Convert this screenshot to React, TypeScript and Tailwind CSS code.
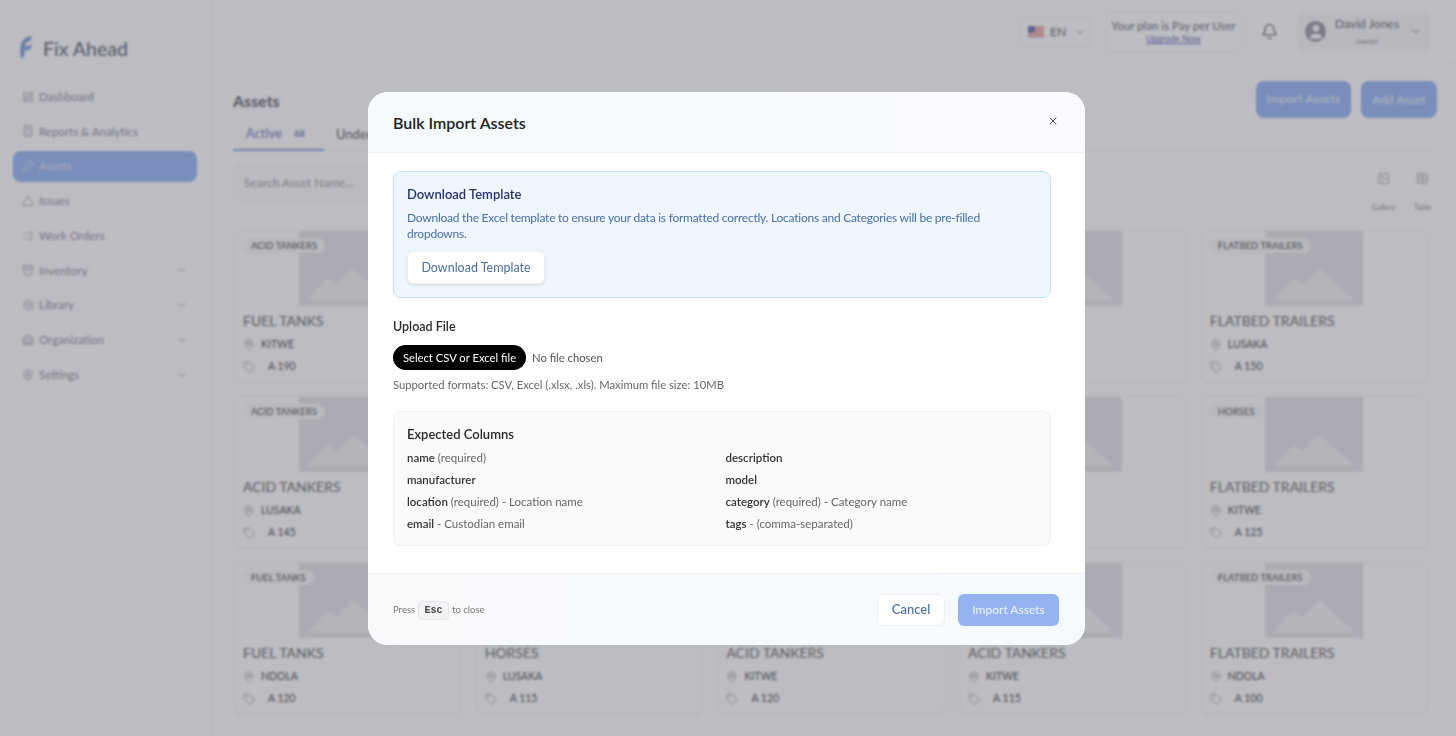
import React from "react";
import {
  Archive,
  Bell,
  Bolt,
  Building2,
  Calculator,
  ChevronDown,
  Image as ImageIcon,
  KeyRound,
  LayoutDashboard,
  ListChecks,
  MapPin,
  Settings,
  Table,
  Tag,
  Triangle,
  User,
  X,
} from "lucide-react";

const navItems = [
  { name: "Dashboard", icon: LayoutDashboard },
  { name: "Reports & Analytics", icon: Calculator },
  { name: "Assets", icon: KeyRound, active: true },
  { name: "Issues", icon: Triangle },
  { name: "Work Orders", icon: ListChecks },
  { name: "Inventory", icon: Archive, more: true },
  { name: "Library", icon: Bolt, more: true },
  { name: "Organization", icon: Building2, more: true },
  { name: "Settings", icon: Settings, more: true },
];

const assets = [
  { badge: "ACID TANKERS", title: "FUEL TANKS", place: "KITWE", code: "A 190" },
  { badge: "HORSES", title: "HORSES", place: "NDOLA", code: "A 185" },
  { badge: "FUEL TANKS", title: "FUEL TANKS", place: "KITWE", code: "A 180" },
  { badge: "ACID TANKERS", title: "ACID TANKERS", place: "LUSAKA", code: "A 170" },
  { badge: "FLATBED TRAILERS", title: "FLATBED TRAILERS", place: "LUSAKA", code: "A 150" },
  { badge: "ACID TANKERS", title: "ACID TANKERS", place: "LUSAKA", code: "A 145" },
  { badge: "HORSES", title: "HORSES", place: "KITWE", code: "A 140" },
  { badge: "FUEL TANKS", title: "FUEL TANKS", place: "NDOLA", code: "A 135" },
  { badge: "ACID TANKERS", title: "ACID TANKERS", place: "NDOLA", code: "A 130" },
  { badge: "HORSES", title: "FLATBED TRAILERS", place: "KITWE", code: "A 125" },
  { badge: "FUEL TANKS", title: "FUEL TANKS", place: "NDOLA", code: "A 120" },
  { badge: "HORSES", title: "HORSES", place: "LUSAKA", code: "A 115" },
  { badge: "ACID TANKERS", title: "ACID TANKERS", place: "KITWE", code: "A 120" },
  { badge: "ACID TANKERS", title: "ACID TANKERS", place: "KITWE", code: "A 115" },
  { badge: "FLATBED TRAILERS", title: "FLATBED TRAILERS", place: "NDOLA", code: "A 100" },
];

const columns = [
  { key: "name", note: " (required)" },
  { key: "description", note: "" },
  { key: "manufacturer", note: "" },
  { key: "model", note: "" },
  { key: "location", note: " (required) - Location name" },
  { key: "category", note: " (required) - Category name" },
  { key: "email", note: " - Custodian email" },
  { key: "tags", note: " - (comma-separated)" },
];

const Placeholder = () => (
  <svg viewBox="0 0 98 75" className="w-[98px] h-[75px] block">
    <rect width="98" height="75" fill="#e8e8ea" />
    <path d="M8 69 L29 47 L37 54 L54 37 L90 69 Z" fill="#f4f4f6" />
  </svg>
);

const AssetCard = ({ item }: { item: (typeof assets)[number] }) => (
  <div className="relative h-[152px] rounded-lg border border-[#f7f7f8] bg-white px-[8px] shadow-[0_1px_2px_rgba(0,0,0,0.04)]">
    <div className="flex justify-center">
      <Placeholder />
    </div>
    <span className="absolute left-[8px] top-[7px] rounded-full bg-[#fafafa] px-2 py-px text-[9.5px] leading-[13px] text-[#666]">
      {item.badge}
    </span>
    <div className="mt-[5px] text-[14px] leading-[20px] text-[#7c7c7c]">{item.title}</div>
    <div className="mt-[3px] flex h-[22px] items-center gap-[6px] text-[10.5px] text-[#666]">
      <MapPin className="h-3 w-3 text-[#a0a0a0] shrink-0" strokeWidth={1.5} />
      {item.place}
    </div>
    <div className="flex h-[22px] items-center gap-[13px] text-[10.5px] text-[#666]">
      <Tag className="h-3 w-3 text-[#a0a0a0] shrink-0" strokeWidth={1.5} />
      {item.code}
    </div>
  </div>
);

const App: React.FC = () => {
  return (
    <div className="relative flex h-[736px] w-[1456px] overflow-hidden bg-white font-['Lato',sans-serif]">
      {/* Sidebar */}
      <aside className="flex w-[213px] shrink-0 flex-col border-r border-[#f6f6f8] pl-[13px] pr-[15px]">
        <div className="flex h-[96px] items-start pl-[6px] pt-[35px]">
          <svg viewBox="0 0 16 26" className="h-[25px] w-[15px]">
            <path d="M3 25 C1 20 1 15 2 11 C3 5 7 1 14 1 L12 6 C8 6 7 9 6.5 12 L14 10 L12 15 L6 16 C6 20 6 23 3 25 Z" fill="#8fa9e0" />
          </svg>
          <span className="ml-[9px] text-[19.5px] font-medium leading-[27px] text-[#7d7f88]">Fix Ahead</span>
        </div>
        <nav className="flex flex-col gap-[3.75px] -mt-[15px]">
          {navItems.map((item) => {
            const Icon = item.icon;
            return (
              <div
                key={item.name}
                className={
                  item.active
                    ? "flex h-[31px] items-center rounded-lg bg-[#a3c0f4] pl-[9px] pr-[9px] text-white/70"
                    : "flex h-[31px] items-center rounded-lg pl-[9px] pr-[9px] text-[#a0a0a8]"
                }
              >
                <Icon className="h-[12px] w-[12px] shrink-0" strokeWidth={1.5} />
                <span className="ml-[5px] flex-1 text-[11.5px]">{item.name}</span>
                {item.more && <ChevronDown className="h-[12px] w-[12px]" strokeWidth={1.5} />}
              </div>
            );
          })}
        </nav>
      </aside>

      <div className="flex min-w-0 flex-1 flex-col">
        {/* Top bar */}
        <header className="flex h-[64px] shrink-0 items-center justify-end gap-[15px] border-b border-[#f6f6f8] pr-[26px]">
          <div className="flex h-[30px] w-[72px] items-center gap-[6px] rounded-md border border-[#f7f7f8] pl-[8px] text-[#777]">
            <svg viewBox="0 0 16 12" className="h-[12px] w-[16px]">
              <rect width="16" height="12" fill="#f0d5d5" />
              <path d="M0 1.5h16M0 4.2h16M0 6.9h16M0 9.6h16" stroke="#e08d8d" strokeWidth="1" />
              <rect width="7" height="6.5" fill="#7d88b8" />
            </svg>
            <span className="text-[12px]">EN</span>
            <ChevronDown className="ml-[2px] h-3 w-3" strokeWidth={1.5} />
          </div>
          <div className="flex h-[42px] w-[135px] flex-col items-center justify-center rounded-md border border-[#f7f7f8] leading-none">
            <span className="whitespace-nowrap text-[11.5px] text-[#83838a]">Your plan is Pay per User</span>
            <span className="mt-[3px] text-[9px] text-[#8080c0] underline">Upgrade Now</span>
          </div>
          <Bell className="mx-[5px] h-[17px] w-[17px] text-[#666]" strokeWidth={1.5} />
          <div className="flex h-[41px] w-[132px] items-center rounded-md bg-[#fafafb] pl-[7px]">
            <span className="flex h-[21px] w-[21px] items-center justify-center overflow-hidden rounded-full bg-[#a8a8ae]">
              <User className="h-[18px] w-[18px] text-white" fill="white" strokeWidth={1} />
            </span>
            <div className="ml-[8px] flex w-[66px] flex-col items-center leading-none">
              <span className="whitespace-nowrap text-[12.25px] text-[#7a7a80]">David Jones</span>
              <span className="mt-[6px] text-[8px] text-[#9a9aa0]">owner</span>
            </div>
            <ChevronDown className="ml-[9px] h-[13px] w-[13px] text-[#777]" strokeWidth={1.5} />
          </div>
        </header>

        {/* Page */}
        <main className="flex min-h-0 flex-1 flex-col pl-[20px] pr-[19px]">
          <div className="flex h-[54px] items-start justify-between">
            <h1 className="pt-[26px] text-[16px] font-bold leading-[22px] text-[#77777d]">Assets</h1>
            <div className="flex gap-[10px] pt-[17px]">
              <button className="h-[37px] w-[95px] rounded-lg bg-[#a3c0f4] text-[12.25px] text-white/80">Import Assets</button>
              <button className="h-[37px] w-[76px] rounded-lg bg-[#a3c0f4] text-[12px] text-white/80">Add Asset</button>
            </div>
          </div>
          <div className="flex h-[33px] items-start border-b border-[#f3f3f5]">
            <div className="flex h-[33px] w-[91px] items-center gap-[12px] border-b-2 border-[#a2aee0] pl-[13px] text-[13px] text-[#8d8dc0]">
              Active
              <span className="text-[9px] font-bold">68</span>
            </div>
            <span className="ml-[12px] text-[13px] leading-[33px] text-[#777]">Under Maintenance</span>
          </div>
          <div className="flex h-[79px] items-start justify-between pt-[14px]">
            <div className="flex h-[36px] w-[300px] items-center rounded-lg border border-[#f3f3f5] bg-[#fdfdfd] pl-[10px] text-[12px] text-[#aaaab0]">
              Search Asset Name...
            </div>
            <div className="mt-[7px] flex gap-[16px] pr-[3px] text-[#a0a0a0]">
              <div className="flex w-[23px] flex-col items-center">
                <ImageIcon className="h-[13px] w-[13px]" strokeWidth={1.25} />
                <span className="mt-[18px] text-[7.5px] leading-[10px]">Gallery</span>
              </div>
              <div className="flex w-[23px] flex-col items-center">
                <Table className="h-[13px] w-[13px]" strokeWidth={1.25} />
                <span className="mt-[18px] text-[7.5px] leading-[10px]">Table</span>
              </div>
            </div>
          </div>
          <div className="mr-[9px] ml-px grid grid-cols-5 gap-x-[14.5px] gap-y-[14px]">
            {assets.map((item, index) => (
              <AssetCard key={index} item={item} />
            ))}
          </div>
        </main>
      </div>

      {/* Modal overlay */}
      <div className="absolute inset-0 flex items-center justify-center bg-[#101024]/[0.28] pr-[3px] backdrop-blur-[1px]">
        <div className="flex h-[553px] w-[717px] flex-col overflow-hidden rounded-[20px] bg-white">
          <div className="flex h-[61px] shrink-0 items-center justify-between border-b border-[#eef0f3] bg-gradient-to-r from-[#f6fafe] to-[#f9fbfe] pl-[25px] pr-[26px] pt-[2px]">
            <h2 className="text-[16px] font-semibold text-[#222]">Bulk Import Assets</h2>
            <X className="mb-[3px] h-[12px] w-[12px] text-[#333]" strokeWidth={1.75} />
          </div>

          <div className="flex flex-1 flex-col px-[25px] pr-[34px] pt-[18px]">
            <div className="h-[127px] rounded-lg border border-[#c9dcf3] bg-[#eef6fe] px-[13px] pt-[12px]">
              <h3 className="text-[13px] font-semibold leading-[20px] text-[#27336b]">Download Template</h3>
              <p className="mt-[6px] text-[12px] leading-[16px] tracking-[-0.24px] text-[#4b6fa5]">
                Download the Excel template to ensure your data is formatted correctly. Locations and Categories will be pre-filled dropdowns.
              </p>
              <button className="mt-[9px] h-[33px] w-[138px] rounded-md border border-[#eef2f7] bg-white pt-[2px] text-[12.5px] text-[#4d6f9c] shadow-sm">
                Download Template
              </button>
            </div>

            <h3 className="mt-[20px] text-[12.5px] font-semibold leading-[18px] text-[#2a2a2a]">Upload File</h3>
            <div className="mt-[9px] flex items-center gap-[6px]">
              <button className="h-[25px] w-[133px] rounded-full bg-black pt-[2px] text-[11.25px] text-white">Select CSV or Excel file</button>
              <span className="pt-[2px] text-[11.25px] text-[#555]">No file chosen</span>
            </div>
            <p className="mt-[7px] text-[11.25px] leading-[16px] text-[#666]">Supported formats: CSV, Excel (.xlsx, .xls). Maximum file size: 10MB</p>

            <div className="mt-[18px] h-[135px] rounded-lg border border-[#eef0f3] bg-[#f8fafc] px-[12px] pt-[12px]">
              <h3 className="pl-px text-[13px] font-semibold leading-[20px] text-[#2a2a2a]">Expected Columns</h3>
              <div className="mt-[3px] grid grid-cols-2 gap-x-[6px] pl-px">
                {columns.map((col) => (
                  <div key={col.key} className="h-[22px] text-[11.5px] leading-[22px] text-[#666]">
                    <span className="font-semibold text-[#333]">{col.key}</span>
                    {col.note}
                  </div>
                ))}
              </div>
            </div>
          </div>

          <div className="flex h-[72px] shrink-0 items-center justify-between border-t border-[#f0f2f4] bg-gradient-to-r from-[#f8fafc] to-[#f6fafe] pl-[25px] pr-[26px] pt-[2px]">
            <div className="flex items-center gap-[3px] text-[9.5px] text-[#777]">
              Press
              <kbd className="flex h-[19px] w-[31px] items-center justify-center rounded-sm border border-[#e3e6ea] bg-[#f1f3f5] font-['Liberation_Mono',monospace] text-[10px] font-bold text-[#444]">
                Esc
              </kbd>
              to close
            </div>
            <div className="flex gap-[13px]">
              <button className="h-[32px] w-[68px] rounded-md border border-[#eceff3] bg-white text-[13px] font-medium text-[#4d6f9c]">Cancel</button>
              <button className="h-[32px] w-[101px] rounded-md bg-[#94b3f0] text-[12px] font-medium text-white/80">Import Assets</button>
            </div>
          </div>
        </div>
      </div>
    </div>
  );
};

export default App;
